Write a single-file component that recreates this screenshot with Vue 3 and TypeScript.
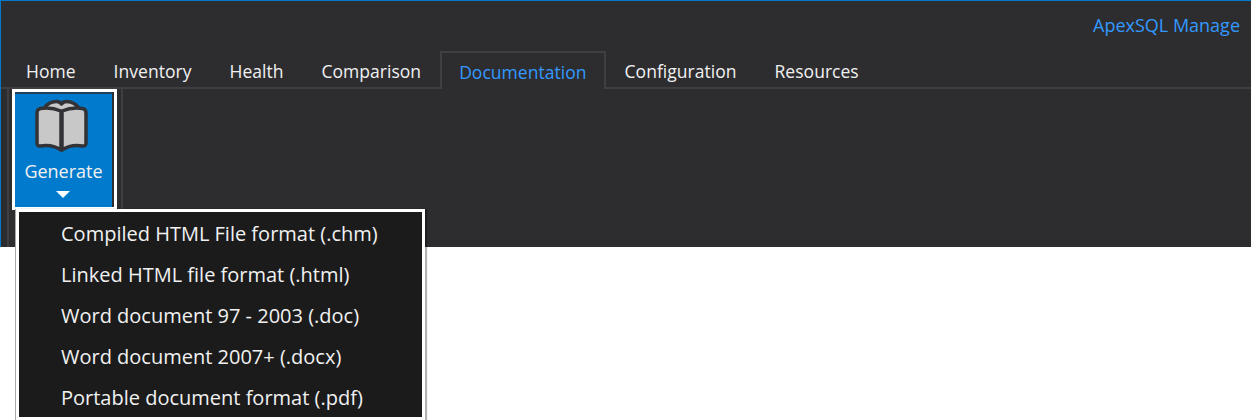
<script setup lang="ts">
const tabs = ['Home', 'Inventory', 'Health', 'Comparison', 'Documentation', 'Configuration', 'Resources']
const items = [
  'Compiled HTML File format (.chm)',
  'Linked HTML file format (.html)',
  'Word document 97 - 2003 (.doc)',
  'Word document 2007+ (.docx)',
  'Portable document format (.pdf)',
]
</script>

<template>
  <div class="page">
    <div class="window">
      <div class="title"><span class="brand">ApexSQL Manage</span></div>
      <div class="tabs">
        <div v-for="t in tabs" :key="t" class="tab" :class="{ active: t === 'Documentation' }">{{ t }}</div>
      </div>
      <div class="ribbon">
        <div class="group">
          <button class="gen">
            <svg class="book" width="53" height="53" viewBox="0 0 53 53">
              <path d="M8 11 C12 3 23 0 26.5 5 C30 0 41 3 45 11 L26.5 16 Z" fill="#c8c8c8" stroke="#333337" stroke-width="3.5" stroke-linejoin="round" />
              <path d="M26 12 C20 9.5 12 8.5 5.5 9.5 Q2 10 2 14 V44 Q2 47.5 5.5 47 C12 46 20 47 26 51 Z" fill="#c8c8c8" stroke="#333337" stroke-width="3.5" stroke-linejoin="round" />
              <path d="M27 12 C33 9.5 41 8.5 47.5 9.5 Q51 10 51 14 V44 Q51 47.5 47.5 47 C41 46 33 47 27 51 Z" fill="#c8c8c8" stroke="#333337" stroke-width="3.5" stroke-linejoin="round" />
            </svg>
            <span class="label">Generate</span>
            <span class="caret"></span>
          </button>
        </div>
      </div>
      <ul class="menu">
        <li v-for="i in items" :key="i">{{ i }}</li>
      </ul>
    </div>
  </div>
</template>

<style>
html, body { margin: 0; background: #fff; }
</style>

<style scoped>
.page {
  width: 1251px;
  height: 420px;
  overflow: hidden;
  font-family: "Open Sans", "Noto Sans", sans-serif;
}
.window {
  position: relative;
  height: 247px;
  box-sizing: border-box;
  background: #2d2d30;
  border-top: 1px solid #007acc;
  border-left: 1px solid #007acc;
  display: flex;
  flex-direction: column;
}
.title {
  height: 50px;
  display: flex;
  justify-content: flex-end;
  align-items: center;
  padding: 0 11px 2px 0;
  box-sizing: border-box;
  flex: none;
}
.brand { color: #3399ff; font-size: 18px; }
.tabs {
  display: flex;
  height: 38px;
  flex: none;
  padding-left: 6px;
  box-sizing: border-box;
  border-bottom: 2px solid #3f3f41;
}
.tab {
  padding: 0 19px;
  height: 38px;
  box-sizing: border-box;
  color: #f1f1f1;
  font-size: 17.5px;
  letter-spacing: .03px;
  line-height: 40px;
  white-space: nowrap;
}
.tab.active {
  color: #3399ff;
  background: #2d2d30;
  border: 2px solid #3f3f41;
  border-bottom: none;
  padding: 0 17px;
  line-height: 38px;
}
.ribbon {
  flex: 1;
  display: flex;
  margin-left: 6px;
  border-left: 2px solid #3f3f41;
}
.group {
  width: 112px;
  border-right: 2px solid #3f3f41;
  flex: none;
}
.gen {
  display: flex;
  flex-direction: column;
  align-items: center;
  box-sizing: border-box;
  width: 105px;
  height: 121px;
  margin: 0 0 0 3px;
  padding: 7px 2px 0 0;
  background: #007acc;
  border: 3px solid #fff;
  box-shadow: inset -2px 0 0 #2d2d30, inset 0 2px 0 #23415c;
  font-family: inherit;
}
.book { flex: none; margin-left: -4px; }
.label { color: #f1f1f1; font-size: 18px; line-height: 24px; margin-top: 7px; }
.caret {
  margin: 8px 0 0 -2px;
  width: 0;
  height: 0;
  border-left: 7px solid transparent;
  border-right: 7px solid transparent;
  border-top: 7px solid #fff;
}
.menu {
  position: absolute;
  left: 15px;
  top: 208px;
  width: 409px;
  height: 211px;
  box-sizing: border-box;
  margin: 0;
  padding: 1px 0 0;
  list-style: none;
  background: #1b1b1c;
  border: 3px solid #fff;
  box-shadow: -1px 0 0 #a8a8a8, 2px 0 1px rgba(0, 0, 0, .3);
}
.menu li {
  height: 41px;
  line-height: 41px;
  padding-left: 42px;
  color: #f1f1f1;
  font-size: 20px;
  white-space: nowrap;
}
</style>
